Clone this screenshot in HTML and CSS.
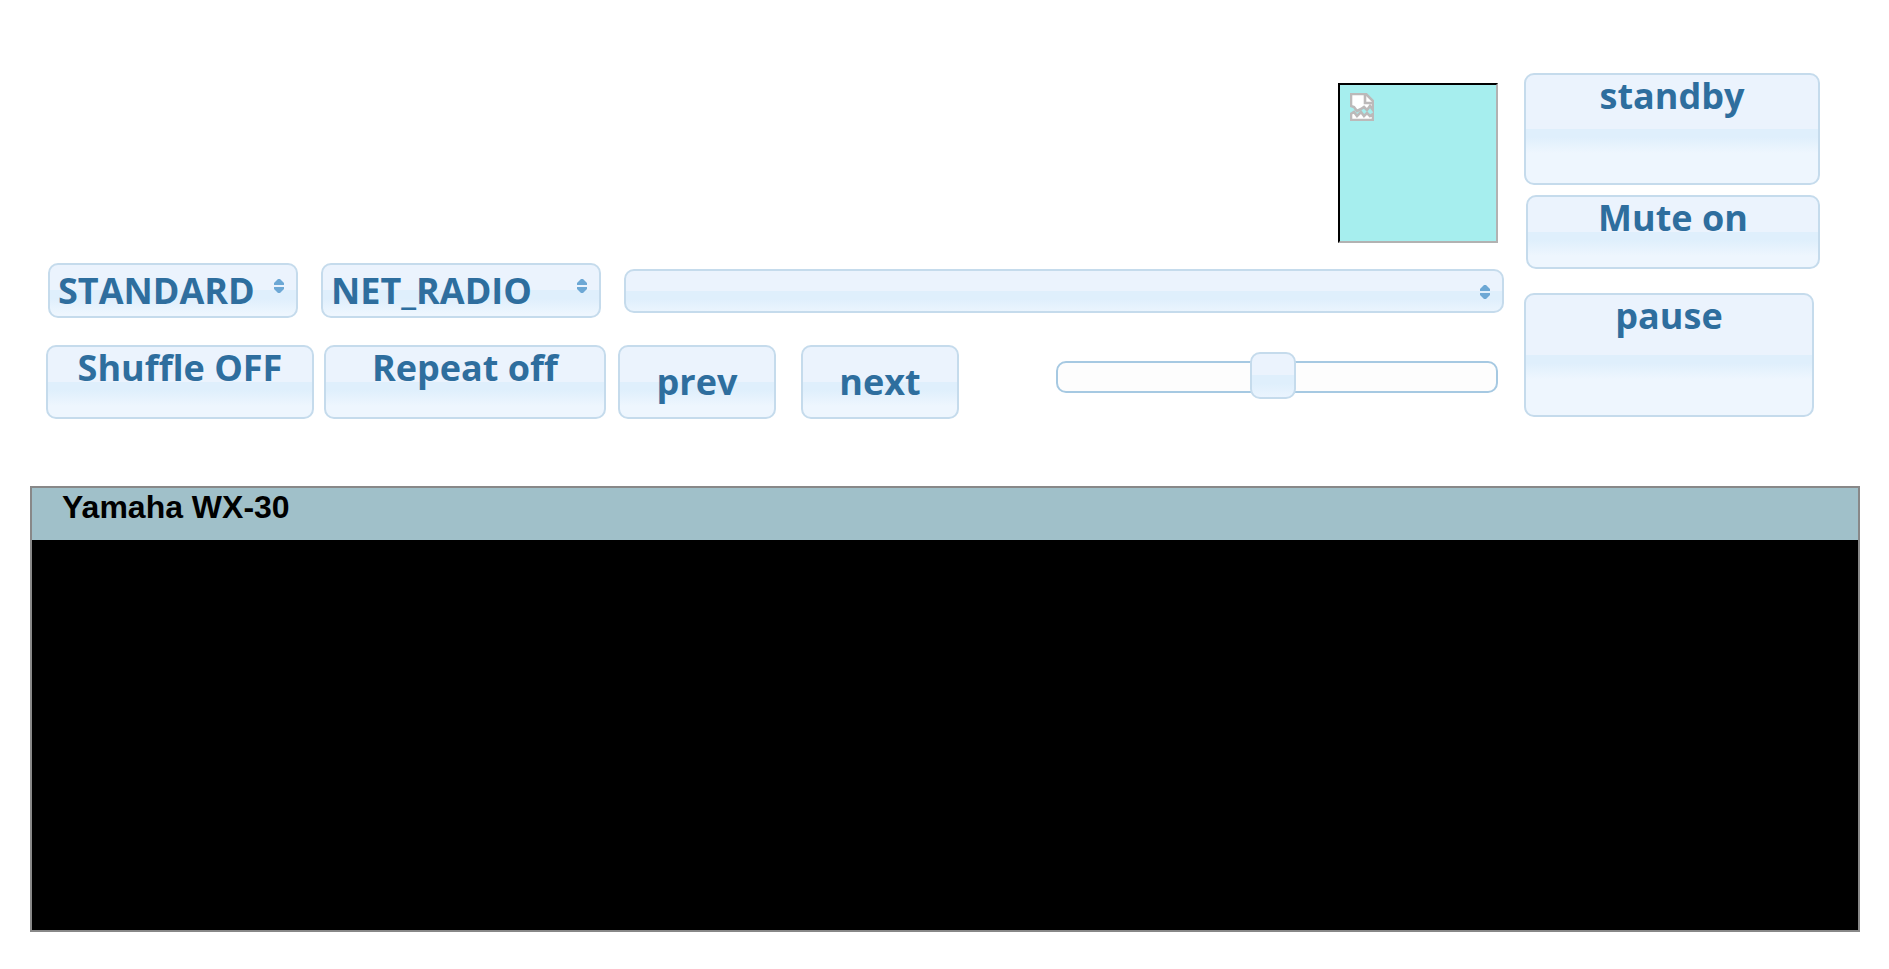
FILE: index.html
```html
<!DOCTYPE html>
<html lang="en">
<head>
<meta charset="utf-8">
<title>Yamaha WX-30</title>
<link rel="stylesheet" href="styles.css">
</head>
<body>
<main class="page">
  <section class="controls">
    <div class="player">
      <button class="art" type="button" aria-label="Album art">
        <svg width="24" height="28" viewBox="0 0 24 28" aria-hidden="true">
          <path d="M1 1H16L23 8V17L20 13L17 17L14 14L11 16L7 18L4 14L1 13Z" fill="#fff" stroke="#bcb9b9" stroke-width="2.6"/>
          <path d="M15 1V10H23" fill="none" stroke="#bcb9b9" stroke-width="2.6"/>
          <path d="M1 27V21L4 19L7 23L11 19L14 23L17 20L20 23L23 21V27Z" fill="#fff" stroke="#bcb9b9" stroke-width="2.6"/>
        </svg>
      </button>
      <div class="row selects">
        <div class="picker picker-mode">
          <select aria-label="Sound program"><option>STANDARD</option></select>
          <svg class="arrows" viewBox="0 0 10 14" aria-hidden="true"><path d="M4 0H6L10 4V6H0V4ZM4 14H6L10 10V8H0V10Z"/></svg>
        </div>
        <div class="picker picker-input">
          <select aria-label="Input"><option>NET_RADIO</option></select>
          <svg class="arrows" viewBox="0 0 10 14" aria-hidden="true"><path d="M4 0H6L10 4V6H0V4ZM4 14H6L10 10V8H0V10Z"/></svg>
        </div>
        <div class="picker picker-list">
          <select aria-label="Station"><option></option></select>
          <svg class="arrows" viewBox="0 0 10 14" aria-hidden="true"><path d="M4 0H6L10 4V6H0V4ZM4 14H6L10 10V8H0V10Z"/></svg>
        </div>
      </div>
      <div class="row transport">
        <div class="row modes">
          <button class="btn shuffle" type="button">Shuffle OFF</button>
          <button class="btn repeat" type="button">Repeat off</button>
        </div>
        <div class="row skip">
          <button class="btn step" type="button">prev</button>
          <button class="btn step" type="button">next</button>
        </div>
        <input class="volume" type="range" min="0" max="100" value="49" aria-label="Volume">
      </div>
    </div>
    <div class="side">
      <button class="btn standby" type="button">standby</button>
      <button class="btn mute" type="button">Mute on</button>
      <button class="btn pause" type="button">pause</button>
    </div>
  </section>
  <section class="panel">
    <h1 class="panel-title">Yamaha WX-30</h1>
    <div class="panel-screen"></div>
  </section>
</main>
</body>
</html>
```
FILE: styles.css
```css
* { box-sizing: border-box; }
body { margin: 0; background: #fff; }
.page { padding: 73px 29px 30px 30px; }
.controls { display: flex; gap: 20px; padding: 0 40px 0 16px; }
.player { flex: 1; min-width: 0; display: flex; flex-direction: column; padding-top: 10px; }
.row { display: flex; }

.art {
  align-self: flex-end;
  display: flex;
  align-items: flex-start;
  width: 160px;
  height: 160px;
  margin: 0 6px 0 0;
  padding: 8px 10px;
  border: 2px solid;
  border-color: #000 #b2b2b2 #b2b2b2 #000;
  border-radius: 0;
  background: #a6eeee;
}

.btn, .picker select {
  border: 2px solid #c5dbec;
  border-radius: 10px;
  background: linear-gradient(#ebf3fd 0 50%, #dfeffc 50% calc(50% + 8px), #eef6fe calc(50% + 24px));
  color: #2e6e9e;
  font: bold 36px/42px "Open Sans", "Noto Sans", sans-serif;
}
.btn {
  display: flex;
  justify-content: center;
  align-items: flex-start;
  height: 74px;
  margin: 0;
  padding: 0;
  white-space: nowrap;
}

.selects { margin-top: 20px; padding-left: 2px; gap: 23px; align-items: center; }
.picker { position: relative; }
.picker select {
  display: block;
  width: 100%;
  height: 55px;
  margin: 0;
  padding: 0 28px 0 8px;
  appearance: none;
}
.picker-mode { width: 250px; }
.picker-input { width: 280px; }
.picker-list { flex: 1; }
.picker-list select { height: 44px; }
.arrows { position: absolute; top: 16px; right: 14px; width: 10px; height: 14px; fill: #6da8d5; pointer-events: none; }

.transport { margin-top: 27px; padding-right: 6px; align-items: flex-start; }
.modes { gap: 10px; }
.skip { gap: 25px; margin-left: 12px; }
.shuffle { width: 268px; }
.repeat { width: 282px; }
.step { width: 158px; align-items: center; }

.volume { flex: 1; min-width: 0; height: 64px; margin: 0 0 0 97px; appearance: none; background: transparent; }
.volume::-webkit-slider-runnable-track {
  height: 32px;
  border: 2px solid #a6c9e2;
  border-radius: 10px;
  background: #fdfdfd;
}
.volume::-webkit-slider-thumb {
  appearance: none;
  width: 46px;
  height: 47px;
  margin-top: -11px;
  border: 2px solid #c5dbec;
  border-radius: 10px;
  background: linear-gradient(#ebf3fd 0 50%, #dfeffc 50% calc(50% + 8px), #eaf4fe);
}

.side { width: 296px; display: flex; flex-direction: column; }
.standby { height: 112px; }
.mute { margin: 10px 0 24px 2px; }
.pause { width: 290px; height: 124px; }

.panel { margin-top: 67px; border: 2px solid #888; background: #000; }
.panel-title {
  height: 52px;
  margin: 0;
  padding: 0 30px;
  background: #a0c0c9;
  color: #000;
  font: bold 32px/38px "Liberation Sans", Arial, sans-serif;
}
.panel-screen { min-height: 390px; }
```
